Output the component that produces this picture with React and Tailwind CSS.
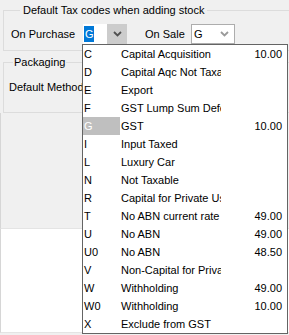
const taxCodes = [
  { code: 'C', name: 'Capital Acquisition', rate: '10.00' },
  { code: 'D', name: 'Capital Aqc Not Taxable', rate: '' },
  { code: 'E', name: 'Export', rate: '' },
  { code: 'F', name: 'GST Lump Sum Deferred', rate: '' },
  { code: 'G', name: 'GST', rate: '10.00', selected: true },
  { code: 'I', name: 'Input Taxed', rate: '' },
  { code: 'L', name: 'Luxury Car', rate: '' },
  { code: 'N', name: 'Not Taxable', rate: '' },
  { code: 'R', name: 'Capital for Private Use', rate: '' },
  { code: 'T', name: 'No ABN current rate', rate: '49.00' },
  { code: 'U', name: 'No ABN', rate: '49.00' },
  { code: 'U0', name: 'No ABN', rate: '48.50' },
  { code: 'V', name: 'Non-Capital for Private Use', rate: '' },
  { code: 'W', name: 'Withholding', rate: '49.00' },
  { code: 'W0', name: 'Withholding', rate: '10.00' },
  { code: 'X', name: 'Exclude from GST', rate: '' },
];

function Chevron({ color }) {
  return (
    <svg width="9" height="6" viewBox="0 0 9 6">
      <polyline points="1,1 4.5,4.5 8,1" fill="none" stroke={color} strokeWidth="1.8" />
    </svg>
  );
}

export default function App() {
  return (
    <div className="relative w-[289px] h-[335px] overflow-hidden bg-[#f0f0f0] text-[11px] text-black flex flex-col" style={{ fontFamily: '"Liberation Sans", Arial, sans-serif' }}>
      {/* Default tax codes */}
      <fieldset className="mt-[3px] ml-[3px] w-[300px] border border-[#dcdcdc] pl-[7px] pt-[7px] pb-[6px] shrink-0">
        <legend className="ml-[9px] px-[3px] leading-[14px]">Default Tax codes when adding stock</legend>
        <div className="flex items-center h-[20px]">
          <span className="w-[72px]">On Purchase</span>
          <div className="w-[44px] h-[20px] flex bg-white">
            <div className="flex-1 flex items-center pl-[1px]">
              <span className="bg-[#0078d7] text-white h-[16px] w-[10px] leading-[16px] pl-[1px]">G</span>
            </div>
            <div className="w-[20px] h-full bg-[#cccccc] flex items-center justify-center">
              <Chevron color="#505050" />
            </div>
          </div>
          <span className="ml-[18px] w-[46px]">On Sale</span>
          <div className="w-[44px] h-[20px] flex items-center bg-white border border-[#adadad]">
            <span className="flex-1 pl-[2px]">G</span>
            <div className="w-[20px] flex items-center justify-center">
              <Chevron color="#9a9a9a" />
            </div>
          </div>
        </div>
      </fieldset>

      {/* Packaging */}
      <fieldset className="mt-[4px] ml-[3px] w-[300px] h-[58px] border border-[#dcdcdc] pl-[5px] pt-[11px] shrink-0">
        <legend className="ml-[4px] px-[1px] leading-[14px]">Packaging</legend>
        <div className="leading-[14px]">Default Method</div>
      </fieldset>

      <div className="flex-1 border-l border-[#d6d6d6]" />
      <div className="h-[105px] shrink-0 bg-white border-t border-b border-[#e4e4e4] border-l border-l-[#d6d6d6]" />
      <div className="h-[2px] shrink-0" />

      {/* Open tax code dropdown */}
      <div className="absolute left-[82px] top-[44px] w-[206px] h-[290px] bg-white border border-[#646464] overflow-hidden">
        {taxCodes.map((t) => (
          <div key={t.code} className="flex h-[18px] items-center leading-[18px]">
            <div className={`w-[37px] h-full pl-[1px] ${t.selected ? 'bg-[#bfbfbf] text-white' : ''}`}>{t.code}</div>
            <div className="w-[101px] pl-[1px] overflow-hidden whitespace-nowrap">{t.name}</div>
            <div className="flex-1 text-right pr-[5px]">{t.rate}</div>
          </div>
        ))}
      </div>
    </div>
  );
}
